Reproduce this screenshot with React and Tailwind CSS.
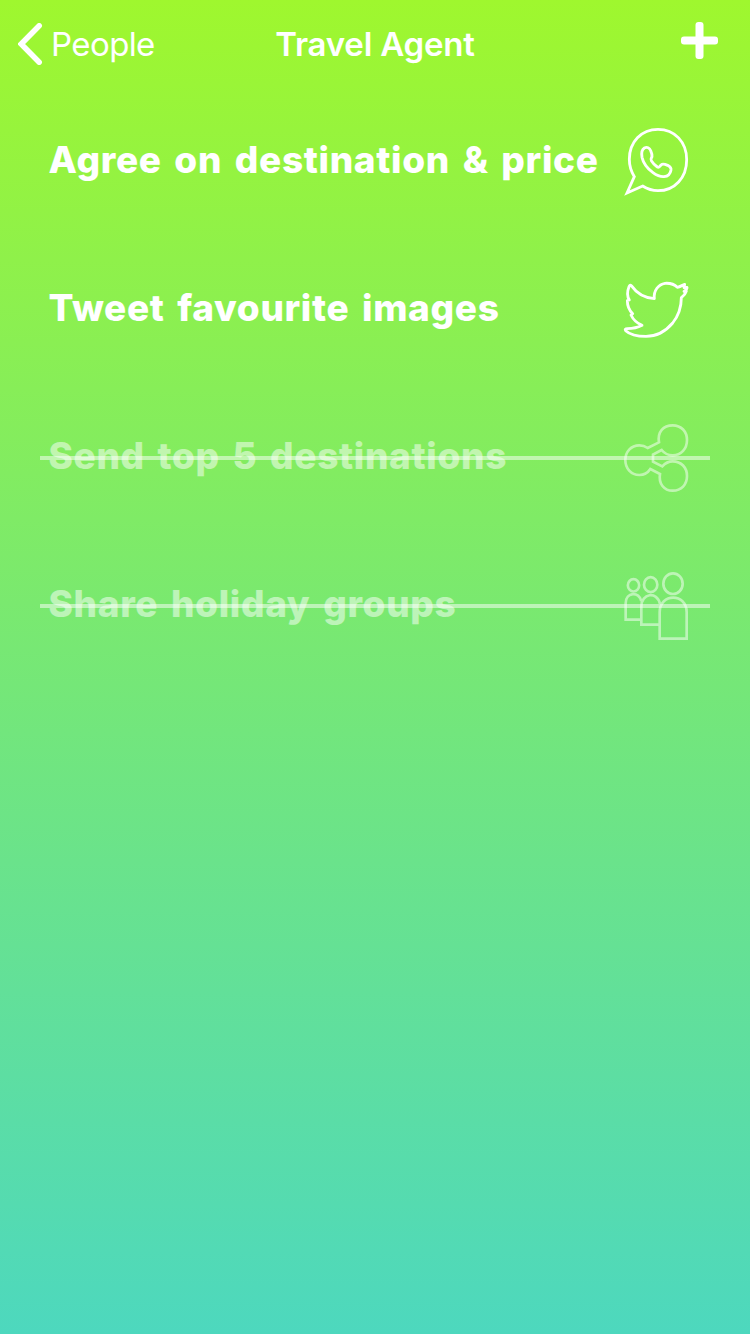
const WhatsAppIcon = () => (
  <svg viewBox="0 6 270 270" className="size-[90px] fill-none stroke-white stroke-[8.5]">
    <path d="M51 234 L73 185 C63 169 58 151 58 133 C58 80 94 43 144 43 C194 43 230 81 230 134 C230 188 194 227 144 227 C127 227 112 222 98 213 Z" />
    <path d="M103 99 C111 95 119 98 122 107 C125 114 127 120 126 125 C123 131 121 133 124 137 C129 145 135 151 142 156 C147 160 149 154 154 149 C158 145 164 147 173 151 C181 155 184 158 183 165 C181 177 174 184 162 185 C151 186 140 181 129 173 C113 161 100 145 96 127 C94 115 95 104 103 99 Z" />
  </svg>
);

const TwitterIcon = () => (
  <svg viewBox="0 0 270 270" className="size-[90px] fill-none stroke-white stroke-[8.5] [stroke-linejoin:round]">
    <path d="M133 101 C103 99 80 85 64 62 C61 59 59 61 57 65 C51 80 51 93 58 105 L52 107 C52 122 57 135 68 146 L63 150 C70 165 80 174 96 181 C83 188 69 191 52 191 C46 191 44 193 47 197 C60 209 80 214 108 214 C139 214 166 200 188 174 C206 151 214 126 214 98 C222 92 227 85 229 78 L222 79 C228 75 232 71 231 67 L222 68 L224 58 C215 62 208 66 202 67 C192 57 180 54 165 55 C146 58 130 76 133 101 Z" />
  </svg>
);

const ShareIcon = () => (
  <svg viewBox="0 0 270 270" className="size-[90px] fill-none stroke-white stroke-[8]">
    <path d="M113 105 L147 88 C142 57 160 37 188 37 C214 37 231 56 231 81 C231 107 214 127 188 127 C174 127 163 121 155 111 L129 125 L129 146 L157 160 C165 151 176 145 188 145 C214 145 231 164 231 189 C231 215 214 233 188 233 C162 233 145 212 150 183 L121 168 C113 180 102 186 88 186 C63 186 46 166 46 141 C46 116 63 97 88 97 C98 97 106 100 113 105 Z" />
  </svg>
);

const PeopleIcon = () => (
  <svg viewBox="0 3 270 270" className="size-[90px] fill-none stroke-white stroke-[8]">
    <ellipse cx="70.500" cy="76" rx="17" ry="18.500" />
    <ellipse cx="122" cy="74" rx="20" ry="22.500" />
    <ellipse cx="189" cy="71" rx="29" ry="31" />
    <path d="M94 179 L47 179 L47 130 C47 95 88 93 94 124" />
    <path d="M149 194 L94 194 L94 139 C94 100 141 92 150 132" />
    <path d="M149 236 L149 157 C149 98 230 98 230 157 L230 236 Z" />
  </svg>
);

const tasks = [
  { title: "Agree on destination & price", Icon: WhatsAppIcon, done: false },
  { title: "Tweet favourite images", Icon: TwitterIcon, done: false },
  { title: "Send top 5 destinations", Icon: ShareIcon, done: true },
  { title: "Share holiday groups", Icon: PeopleIcon, done: true },
];

function Task({ title, Icon, done }) {
  return (
    <li className="relative flex h-[148px] items-center justify-between pr-[50px] pl-[48.5px]">
      <div className={done ? "flex grow items-center justify-between opacity-50" : "flex grow items-center justify-between"}>
        <span className="-mt-1 w-0 text-[37px] leading-[48px] font-extrabold tracking-[0.65px] whitespace-nowrap [word-spacing:4px]">{title}</span>
        <Icon />
      </div>
      {done && <div className="absolute inset-x-10 top-[72px] h-1 bg-white/50" />}
    </li>
  );
}

export default function App() {
  return (
    <main className="min-h-[1334px] w-[750px] bg-linear-to-b/srgb from-[#9ff72e] to-[#4dd8be] font-['Inter',sans-serif] text-white">
      <header className="grid h-[88px] grid-cols-[1fr_auto_1fr] items-center text-[33px] leading-[40px]">
        <button className="flex items-center pl-[18px]">
          <svg viewBox="0 0 25 42" className="h-[42px] w-[25px] fill-none stroke-white stroke-[5.5] [stroke-linecap:round]">
            <path d="M21.200 2.800 L3.200 21 L21.200 39.200" />
          </svg>
          <span className="ml-2 font-normal tracking-[-0.6px]">People</span>
        </button>
        <h1 className="font-semibold tracking-[-0.2px]">Travel Agent</h1>
        <button className="flex justify-end pr-8 pb-[7px]">
          <svg viewBox="0 0 37 37" className="size-[37px] fill-white">
            <rect x="14.500" width="8" height="37" rx="3" />
            <rect y="14.500" width="37" height="8" rx="3" />
          </svg>
        </button>
      </header>
      <ul>
        {tasks.map((task) => (
          <Task key={task.title} {...task} />
        ))}
      </ul>
    </main>
  );
}
